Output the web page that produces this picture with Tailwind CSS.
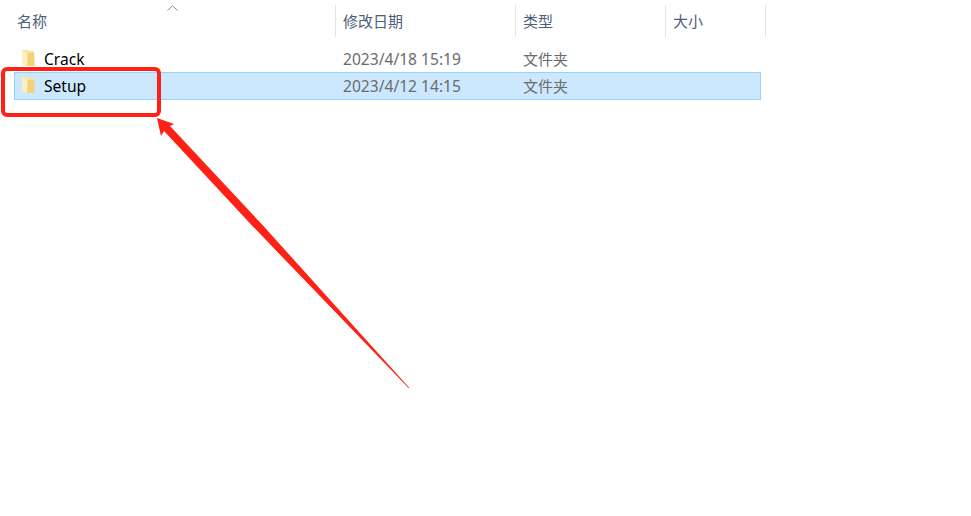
<!DOCTYPE html>
<html lang="zh-CN">
<head>
  <meta charset="UTF-8">
  <title>文件夹</title>
  <script src="https://cdn.jsdelivr.net/npm/@tailwindcss/browser@4"></script>
</head>
<body class="bg-white">
  <div class="relative w-[971px] h-[516px] overflow-hidden bg-white text-[15px] font-['Noto_Sans','Noto_Sans_CJK_SC',sans-serif]">
    <!-- header -->
    <div class="flex h-[32px] mt-[5px] text-[#4c607a]">
      <div class="relative w-[336px] pl-[17px] leading-[32px] border-r border-[#e5e5e5]">
        名称
        <svg class="absolute left-[167px] top-0" width="11" height="6" viewBox="0 0 11 6" fill="none"><path d="M0.5 5.5 L5.5 0.8 L10.5 5.5" stroke="#8a8a8a" stroke-width="1"/></svg>
      </div>
      <div class="w-[180px] pl-[7px] leading-[32px] border-r border-[#e5e5e5]">修改日期</div>
      <div class="w-[150px] pl-[7px] leading-[32px] border-r border-[#e5e5e5]">类型</div>
      <div class="w-[100px] pl-[7px] leading-[32px] border-r border-[#e5e5e5]">大小</div>
    </div>

    <!-- rows -->
    <div class="pt-[9px] pl-[14px] w-[761px]">
      <div class="flex items-center h-[26px] pt-[1px] border border-transparent">
        <div class="w-[321px] flex items-center pl-[7px] text-black">
          <svg class="-mt-[2px]" width="13" height="17" viewBox="0 0 13 17"><path d="M0 0 H6 L7 1 H12 V14 L12.5 16 H4 L0 14 Z" fill="#f7e3a1"/><path d="M6 3 H12.5 V16 H5 Z" fill="#f3d27a"/><path d="M0 0 L5 3 V16 L0 14 Z" fill="#fcefc4"/></svg>
          <span class="ml-[9px] text-[15.6px]">Crack</span>
        </div>
        <div class="w-[180px] pl-[7px] text-[15.6px] text-[#6b6b6b]">2023/4/18 15:19</div>
        <div class="pl-[7px] text-[#6b6b6b]">文件夹</div>
      </div>
      <div class="flex items-center h-[28px] bg-[#cce8ff] border border-[#99d1ff]">
        <div class="w-[321px] flex items-center pl-[7px] text-black">
          <svg class="-mt-[1px]" width="13" height="17" viewBox="0 0 13 17"><path d="M0 0 H6 L7 1 H12 V14 L12.5 16 H4 L0 14 Z" fill="#f7e3a1"/><path d="M6 3 H12.5 V16 H5 Z" fill="#f3d27a"/><path d="M0 0 L5 3 V16 L0 14 Z" fill="#fcefc4"/></svg>
          <span class="ml-[9px] pt-[2px] text-[15.6px]">Setup</span>
        </div>
        <div class="w-[180px] pl-[7px] pt-[2px] text-[15.6px] text-[#6b6b6b]">2023/4/12 14:15</div>
        <div class="pl-[7px] text-[#6b6b6b]">文件夹</div>
      </div>
    </div>

    <!-- annotation -->
    <div class="absolute left-[1px] top-[67px] w-[160px] h-[50px] border-4 border-[#ff2116] rounded-[6px]"></div>
    <svg class="absolute left-0 top-0" width="971" height="516" viewBox="0 0 971 516">
      <path d="M157 118 L174 124 L170 126 L262.5 225 L409.5 388 L408.5 388 L251.5 225 L164 131 L161 136 Z" fill="#ff2116"/>
    </svg>
  </div>
</body>
</html>
